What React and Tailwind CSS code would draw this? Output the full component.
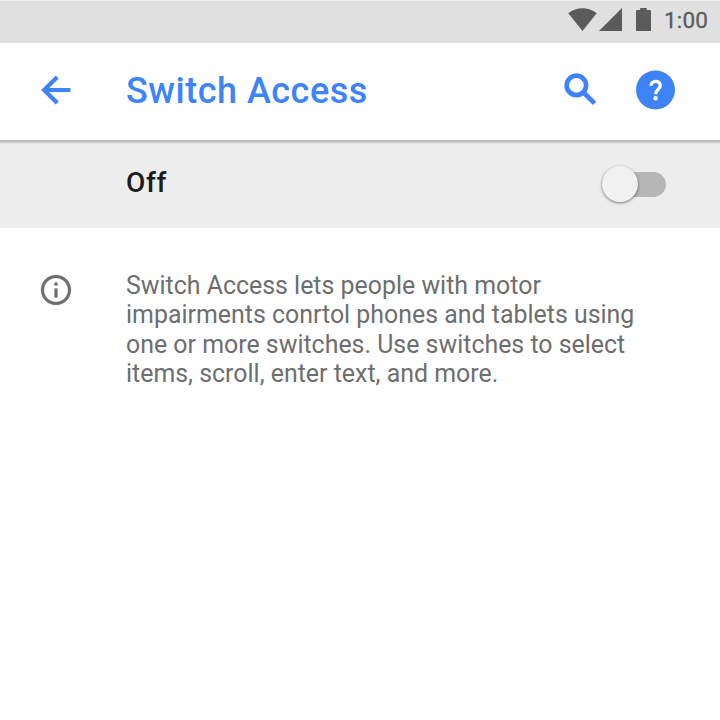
function StatusBar() {
  return (
    <div className="flex h-[43px] items-start border-t border-[#ececec] bg-[#e0e0e0] pl-[568px] text-[#5b5b5b]">
      <svg className="mt-[7px] h-[23px] w-[29px] shrink-0" viewBox="0 0 29 23" fill="currentColor">
        <path d="M0.3 5.2C8.5-1.4 20.5-1.4 28.7 5.2L14.5 23Z" />
      </svg>
      <svg className="mt-[7px] ml-[2px] h-[23px] w-[23px] shrink-0" viewBox="0 0 23 23" fill="currentColor">
        <path d="M0 23H23V0Z" />
      </svg>
      <svg className="mt-[7px] ml-[14px] h-[23px] w-[15px] shrink-0" viewBox="0 0 15 23" fill="currentColor">
        <path d="M4.2 0H10.6V2H13.8Q15 2 15 3.2V23H0V3.2Q0 2 1.2 2H4.2Z" />
      </svg>
      <span className="mt-[5px] ml-[13px] text-[22.5px] leading-[28px] tracking-[0.2px] whitespace-nowrap [-webkit-text-stroke:0.3px_#5b5b5b]">1:00</span>
    </div>
  );
}

function AppBar() {
  return (
    <header className="flex h-[97px] items-start bg-white text-[#3f83f8]">
      <svg className="mt-[32px] ml-[41px] h-[30px] w-[30px] shrink-0" viewBox="0 0 30 30" fill="none" stroke="currentColor" strokeWidth="4.2">
        <path d="M29.5 15H4M16.2 2L3.2 15L16.2 28" />
      </svg>
      <h1 className="mt-[26px] ml-[55px] w-[438px] text-[36px] leading-[44px] font-medium tracking-[0.5px] whitespace-nowrap">Switch Access</h1>
      <svg className="mt-[30px] h-[33px] w-[33px] shrink-0" viewBox="0 0 33 33" fill="none" stroke="currentColor">
        <circle cx="12.4" cy="12.4" r="9.7" strokeWidth="4.7" />
        <path d="M18.8 18.8L30.6 30.4" strokeWidth="4.8" />
      </svg>
      <svg className="mt-[27px] ml-[39px] h-[40px] w-[39px] shrink-0" viewBox="0 0 39 40">
        <circle cx="19.5" cy="19.9" r="19.5" fill="currentColor" />
        <path d="M15 15.8C15 9.9 24.3 9.9 24.3 15.6C24.3 19.3 19.7 19.3 19.7 24.2" fill="none" stroke="#fff" strokeWidth="3.3" />
        <circle cx="19.6" cy="28.3" r="2.2" fill="#fff" />
      </svg>
    </header>
  );
}

function SwitchRow() {
  return (
    <div className="flex h-[88px] items-start bg-[#ededed] bg-linear-to-b from-[#b8b8b8] from-[1px] to-[#ededed] to-[4px] pl-[126px]">
      <span className="mt-[26px] w-[476px] text-[28px] leading-[34px] font-medium tracking-[0.6px] text-[#1c1c1c]">Off</span>
      <div className="mt-[32px] flex h-[25px] w-[64px] items-center rounded-full bg-[#b6b6b6]">
        <div className="-mt-[2px] size-[36px] shrink-0 rounded-full bg-[#f1f1f1] shadow-[0_1px_3px_rgba(0,0,0,0.5)]" />
      </div>
    </div>
  );
}

export default function App() {
  return (
    <div className="h-[720px] w-[720px] overflow-hidden bg-white font-[Roboto,sans-serif]">
      <StatusBar />
      <AppBar />
      <SwitchRow />
      <div className="flex items-start pt-[42px] text-[#6e6e6e]">
        <svg className="mt-[1.5px] ml-[38px] size-[36px] shrink-0" viewBox="0 0 24 24" fill="currentColor" stroke="currentColor" strokeWidth="0.15">
          <path d="M11 7h2v2h-2zm0 4h2v6h-2zm1-9C6.48 2 2 6.48 2 12s4.48 10 10 10 10-4.48 10-10S17.52 2 12 2zm0 18c-4.41 0-8-3.59-8-8s3.59-8 8-8 8 3.59 8 8-3.59 8-8 8z" />
        </svg>
        <p className="mt-[0.5px] ml-[52px] text-[24.9px] leading-[29.5px] tracking-[0.01px] whitespace-nowrap">
          Switch Access lets people with motor
          <br />
          impairments conrtol phones and tablets using
          <br />
          one or more switches. Use switches to select
          <br />
          items, scroll, enter text, and more.
        </p>
      </div>
    </div>
  );
}
